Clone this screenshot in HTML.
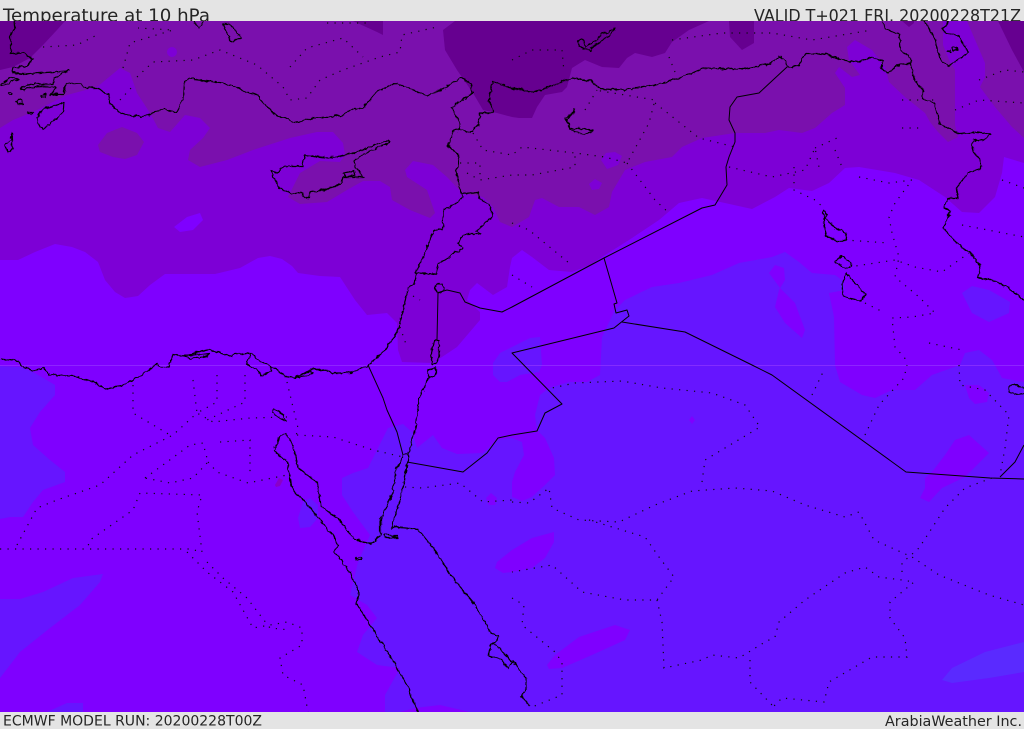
<!DOCTYPE html>
<html><head><meta charset="utf-8"><title>Temperature at 10 hPa</title>
<style>html,body{margin:0;padding:0;background:#e4e4e4;width:1024px;height:729px;overflow:hidden}svg{display:block}
text{font-family:"DejaVu Sans","Liberation Sans",sans-serif;fill:#252525}</style></head><body>
<svg width="1024" height="729" viewBox="0 0 1024 729" xmlns="http://www.w3.org/2000/svg">
<defs><clipPath id="h"><rect x="0" y="0" width="1024" height="21"/></clipPath><clipPath id="m"><rect x="0" y="21" width="1024" height="691"/></clipPath>
<filter id="j" x="0" y="0" width="1024" height="729" filterUnits="userSpaceOnUse"><feTurbulence type="turbulence" baseFrequency="0.12" numOctaves="2" seed="4" result="t"/><feDisplacementMap in="SourceGraphic" in2="t" scale="3.5" xChannelSelector="R" yChannelSelector="G"/></filter></defs>
<rect width="1024" height="729" fill="#e4e4e4"/>
<g clip-path="url(#h)">
<text x="3" y="21.5" font-size="18" textLength="207" lengthAdjust="spacingAndGlyphs">Temperature at 10 hPa</text>
<text x="754" y="21.5" font-size="17" textLength="267" lengthAdjust="spacingAndGlyphs">VALID T+021 FRI. 20200228T21Z</text>
</g>
<text x="3" y="725.5" font-size="14.5" textLength="259" lengthAdjust="spacingAndGlyphs">ECMWF MODEL RUN: 20200228T00Z</text>
<text x="885" y="726" font-size="14.5" textLength="137" lengthAdjust="spacingAndGlyphs">ArabiaWeather Inc.</text>
<g clip-path="url(#m)">
<rect x="0" y="21" width="1024" height="691" fill="#7f00ff"/>
<path fill="#7d00d6" d="M0 260 18 260 35 252 55 244 72 247 85 252 98 262 105 280 115 292 125 298 138 296 150 285 165 274 190 274 215 274 240 268 258 258 270 256 282 259 292 266 298 273 320 276 340 277 355 300 367 315 387 313 397 323 398 350 402 362 433 363 457 347 480 320 480 312 467 300 470 290 477 283 493 295 507 287 510 267 512 258 522 250 532 257 549 270 572 272 590 265 602 257 629 240 659 220 679 203 702 198 725 203 752 209 775 197 789 188 812 191 829 183 845 168 859 167 895 173 919 180 945 197 962 212 979 213 995 197 1002 173 1004 157 1024 163 1024 21 0 21Z"/>
<path fill="#7f00ff" d="M174 227 187 217 200 213 203 220 193 230 180 232Z"/>
<path fill="#7a10ad" d="M0 128 13 120 33 112 67 95 97 87 120 68 130 73 137 93 150 113 158 128 170 132 178 123 185 115 200 118 210 128 203 138 190 150 188 160 200 167 227 160 253 150 290 138 317 132 333 132 343 143 345 155 340 162 320 161 300 173 288 197 300 204 327 202 347 190 363 181 380 181 390 187 392 200 410 210 430 218 435 213 427 190 407 177 405 170 413 161 433 165 447 177 462 193 483 197 493 207 500 222 512 227 529 217 535 200 542 198 559 207 579 207 595 215 609 207 612 192 625 170 645 162 672 157 682 147 702 138 735 133 765 133 779 130 802 133 815 128 832 113 845 105 845 88 835 73 839 67 852 77 860 75 849 60 847 47 855 40 872 50 885 67 889 82 905 97 925 113 930 122 938 132 948 142 958 137 955 125 955 100 955 70 950 62 943 45 943 21 0 21Z"/>
<path fill="#7a10ad" d="M967 21 985 63 985 77 980 87 995 107 1012 127 1024 138 1024 21Z"/>
<path fill="#7a10ad" d="M98 145 107 133 122 127 137 133 144 142 137 155 125 159 113 157 100 152Z"/>
<path fill="#7d00d6" d="M167 52a5 5 0 1 0 10 0a5 5 0 1 0-10 0ZM601 160 606 153 615 152 622 156 618 165 607 169ZM589 184 595 179 602 183 599 189 592 190Z"/>
<path fill="#660090" d="M0 70 13 67 30 58 43 45 57 30 65 21 0 21Z"/>
<path fill="#660090" d="M353 21 377 32 383 35 383 21Z"/>
<path fill="#660090" d="M455 21 443 30 445 50 457 70 473 93 483 110 497 113 512 117 519 118 532 118 537 107 545 95 562 92 567 87 572 68 585 60 602 67 619 68 627 58 635 53 652 57 665 53 672 42 689 30 709 21Z"/>
<path fill="#660090" d="M729 21 730 37 742 50 754 43 754 21Z"/>
<path fill="#660090" d="M902 21 909 27 914 23 914 21Z"/>
<path fill="#660090" d="M998 21 1012 50 1024 72 1024 21Z"/>
<path fill="#6615ff" d="M385 712 385 695 400 668 377 665 357 652 363 635 377 618 367 605 350 595 358 562 370 535 353 512 342 495 342 478 353 473 368 468 377 450 388 428 403 424 412 432 417 448 433 435 442 448 457 454 483 453 497 440 512 438 522 442 524 455 515 472 512 482 512 497 522 501 532 497 545 485 555 475 554 458 545 438 537 430 535 415 540 395 549 388 569 382 587 382 600 375 602 337 615 310 625 300 652 287 679 283 712 275 739 263 772 257 785 252 799 262 812 273 835 275 842 280 845 290 829 293 834 317 835 365 840 382 862 395 875 398 892 390 915 390 932 375 960 365 965 353 979 350 992 360 995 365 1002 378 1024 382 1024 712Z"/>
<path fill="#6615ff" d="M0 366 20 367 33 372 55 385 55 395 40 412 30 428 33 445 50 460 65 472 65 482 43 490 33 502 23 517 10 517 0 519Z"/>
<path fill="#6615ff" d="M0 599 20 599 43 592 73 578 103 574 100 582 80 605 50 628 20 652 0 678Z"/>
<path fill="#6615ff" d="M47 712 67 703 83 703 83 712Z"/>
<path fill="#6615ff" d="M298 518 303 502 310 498 318 505 318 518 310 527 300 528Z"/>
<path fill="#6615ff" d="M962 293 972 313 989 322 1009 313 1010 302 989 290 972 286Z"/>
<path fill="#6615ff" d="M493 375 500 382 507 382 520 375 539 372 542 365 540 337 530 338 512 347 500 353 493 363Z"/>
<path fill="#7f00ff" d="M400 712 415 708 440 705 470 712Z"/>
<path fill="#7f00ff" d="M495 568 497 562 512 550 532 538 554 532 554 542 545 558 532 568 512 572 503 573Z"/>
<path fill="#7f00ff" d="M547 665 555 655 579 637 615 625 630 630 625 640 592 655 562 668 549 669Z"/>
<path fill="#7f00ff" d="M920 498 925 488 925 478 932 472 945 455 955 440 969 435 989 453 965 477 942 488 929 502Z"/>
<path fill="#7f00ff" d="M965 385 979 385 989 393 987 402 975 404 969 398Z"/>
<path fill="#7f00ff" d="M769 273 775 265 784 268 785 280 779 290 775 307 785 323 802 338 805 330 795 303 780 288Z"/>
<path fill="#7f00ff" d="M692 416 695 420 692 424 689 420ZM486 498 491 493 497 498 495 505 489 505Z"/>
<path fill="#8a00c8" d="M275 485 279 478 283 480 280 486 276 487Z"/>
<path fill="#5a2aff" d="M942 680 952 668 985 652 1024 642 1024 672 989 678 952 683Z"/>
<rect x="0" y="365" width="1024" height="1" fill="#9a40ff" opacity=".55"/>

<g fill="none" stroke="#000" stroke-width="1.2" stroke-linejoin="round" filter="url(#j)">
<path d="M13 21 14 28 10 33 10 42 10 53 22 52 32 58 27 65 13 67 12 72 23 73 68 70 53 77 52 83 33 83 20 86 20 89 40 85 55 86 50 93 63 93 65 82 80 83 83 87 98 87 108 95 108 103 120 112 130 115 142 116 163 108 175 112 182 97 183 82 188 78 223 82 257 95 273 113 295 122 313 117 340 115 353 108 362 107 377 90 395 82 427 95 442 88 460 77 470 83 472 92 450 107 460 123 458 128 470 132 478 123 480 112 493 112 488 100 492 80 512 88 535 91 572 77 590 80 600 88 625 89 652 85 679 77 702 67 725 68 742 68 769 63 779 56 785 60 787 67 797 65 805 53 822 53 845 60 860 61 870 56 882 60 880 68 887 73 899 63 910 63 914 80 922 88 922 98 934 103 939 123 959 133 977 131 990 133 985 138 972 140 972 150 980 160 980 168 967 172 955 187 957 197 947 197 944 207 950 210 942 228 959 245 969 252 980 265 977 277 995 280 1009 288 1024 300"/>
<path d="M882 21 884 28 899 33 900 50 910 57 910 63"/>
<path d="M924 21 934 37 939 58 947 65 954 60 967 52 959 35 945 32 942 28 947 21"/>
<path d="M947 51 949 49 950 52ZM951 47 955 46 957 49 953 50Z"/>
<path d="M408 453 403 455 395 468 392 492 380 518 380 535 370 543 353 538 337 518 320 505 317 482 297 467 292 445 285 432 280 435 273 450 287 462 290 485 307 505 333 535 337 545 333 550 350 573 358 592 355 602 383 645 408 688 417 712"/>
<path d="M408 453 402 488 390 528 393 526 417 528 433 548 450 575 473 602 490 632 497 635 495 642 490 643 487 655 500 658 507 667 512 662 497 645 490 643M512 660 525 677 525 688 520 695 529 705"/>
<path d="M0 358 17 360 20 365 33 370 43 367 48 374 72 375 90 380 105 388 120 385 140 375 150 367 155 363 160 366 168 366 172 353 183 355 208 348 227 355 250 352 255 358 270 365 285 375 293 377 313 367 330 372 350 372 367 365 383 350 397 330 407 287 413 283 415 272 433 230 442 228 443 210 462 197 460 192 455 170 458 163 457 153 447 145 452 132 458 128"/>
<path d="M183 355 210 352 207 355 190 358ZM250 352 245 363 255 368 260 375 270 370 270 365M293 377 310 370 313 372 307 375Z"/>
<path d="M415 272 435 273 437 263 462 248 457 242 465 233 480 233 475 230 492 215 488 203 478 197 477 191 460 193"/>
<path d="M270 170 277 172 283 165 302 165 304 154 328 157 350 153 388 139 388 142 363 153 353 160 355 168 363 176 343 176 340 183 320 190 308 192 308 197 303 197 300 191 290 193 278 187 273 178Z"/>
<path d="M342 172 352 170 354 174 345 176Z"/>
<path d="M427 378 418 398 415 425 408 453M433 375 428 378 428 369 434 367 436 372Z"/>
<path d="M437 292 433 288 436 283 441 283 443 288 440 292Z"/>
<path d="M433 340 438 340 438 355 435 363 431 363 430 352Z"/>
<path d="M63 101 62 112 50 122 42 128 37 123 36 117 43 108Z"/>
<path d="M11 132 12 148 7 152 4 143 10 140Z"/>
<path d="M0 83 10 77 18 78 7 83 0 85Z"/>
<path d="M193 21 198 28 203 21M222 23 228 23 241 37 230 41 227 33Z"/>
<path d="M7 93a2 1.5 0 1 0 4 0a2 1.5 0 1 0-4 0ZM15 100 20 99 22 103 17 103ZM27 111h5v2h-5ZM40 94 45 93 45 97 41 96ZM50 93 56 92 56 94 50 94Z"/>
<path d="M576 40 582 38 585 46 597 38 600 33 607 32 614 27 610 35 600 40 590 47 590 50 578 46Z"/>
<path d="M573 107 573 112 564 117 570 128 583 128 592 130 583 134 570 129 566 118 574 111"/>
<path d="M823 209 826 212 824 218 836 228 846 232 845 240 835 240 825 235 823 225Z"/>
<path d="M834 260 841 255 846 260 850 262 850 266 845 268 835 262Z"/>
<path d="M846 272 850 278 860 288 865 293 860 300 850 298 842 295 841 283Z"/>
<path d="M1008 387 1014 383 1024 388 1024 393 1014 394 1008 391Z"/>
<path d="M272 408 280 410 285 420 277 416 272 412Z"/>
<path d="M383 533 390 534 396 537 385 537ZM393 535h4v2h-4ZM354 557 360 557 361 560 355 559Z"/>
</g>
<g fill="none" stroke="#000" stroke-width="1" stroke-linejoin="round">
<path d="M787 67 759 93 737 97 730 107 729 120 735 133 735 142 729 157 726 167 727 185 715 205 702 208 604 258 512 307 502 312 480 308 465 302 460 293 447 290 440 292 438 293 437 340"/>
<path d="M604 258 617 303 614 304 616 313 627 310 629 316 614 328 512 353 562 404 545 413 537 431 512 435 498 438 487 453 463 472 407 462"/>
<path d="M622 322 685 332 752 365 772 375 906 472 990 478 1024 479"/>
<path d="M1000 477 1015 462 1024 445"/>
<path d="M368 365 383 398 387 410 397 432 403 455"/>
</g>

<g fill="none" stroke="#0a0a0a" stroke-width="1.2" stroke-dasharray="1.2 6.3">
<path d="M512 502 529 503 549 488 552 508 579 520 619 522 655 505 692 491 735 488 772 491 805 505 845 517 859 512 874 540 912 557 939 575 989 595 1024 605"/>
<path d="M589 520 645 537 659 557 674 577 657 600 625 600 582 592 552 565 512 572"/>
<path d="M657 600 662 622 664 668 702 660 712 655 739 658 765 642 775 637 779 622 805 600 845 573 865 567 879 577 902 580 914 582 890 602 890 618 905 638 907 657 872 657 829 682 824 702 782 698 772 708"/>
<path d="M750 660 750 682 772 705"/>
<path d="M702 482 705 460 760 427 745 405 712 393 662 388 622 381 575 383 552 388"/>
<path d="M902 572 902 563 919 548 945 508 965 488 992 478"/>
<path d="M865 435 879 405 904 378 907 365M812 395 824 370"/>
<path d="M959 365 960 385 985 390 1009 415 1005 448 1000 475"/>
<path d="M512 598 524 605 522 625 555 652 562 662 562 695 532 707"/>
<path d="M0 549 190 549 202 552 197 512 202 495 140 493 133 510 90 540 87 549"/>
<path d="M17 545 37 508 57 500 100 485 133 455 173 435 197 413 213 422 250 418 287 417"/>
<path d="M145 478 167 462 190 445 203 443 208 462 193 478 170 483 145 478"/>
<path d="M208 462 217 472 248 483 287 475M220 442 250 440 250 472"/>
<path d="M187 552 207 572 233 592 253 628 287 622 302 628 302 645 280 658 283 675 303 685 308 712"/>
<path d="M207 562 223 578 247 598 270 628 290 630"/>
<path d="M133 385 133 413 170 435M193 380 197 413M217 375 217 402 197 413M245 375 245 402 207 420"/>
<path d="M287 382 298 428 295 440M297 435 333 437 373 450 403 457"/>
<path d="M405 487 422 488 460 483 483 502 512 500"/>
<path d="M43 47 77 45 97 35M123 68 130 43 173 30 138 28"/>
<path d="M137 77 153 62 193 60 220 50 257 65 283 87 290 100 307 98 320 80 343 70 380 57 400 52 402 35 437 27"/>
<path d="M290 67 307 48 343 38 363 57M327 23 367 23M120 100 132 87"/>
<path d="M473 133 483 150 512 155 522 147 575 153 605 157 627 163 649 123 655 100 595 90"/>
<path d="M460 163 480 163 480 180 512 175 532 175 575 167 575 153M467 173 480 180"/>
<path d="M512 60 532 50 562 50 564 72M585 110 597 90"/>
<path d="M655 103 699 138 735 147M627 163 655 200 669 213M512 223 529 230 569 263M512 275 532 287"/>
<path d="M672 40 722 33 772 33 812 40 872 30M669 57 675 72"/>
<path d="M729 167 772 177 805 170 815 148 819 167M815 148 837 138M835 150 842 167M794 167 794 190 815 200 824 208"/>
<path d="M859 177 889 183 912 180 895 203 889 217 892 233 899 257 895 277 919 297 935 313 912 317 892 318 895 347 909 363"/>
<path d="M845 240 889 243M849 267 895 260 915 267 942 272 969 253M865 303 885 313M929 343 962 350"/>
<path d="M902 128 919 128M902 100 935 100M955 110 979 100 1024 103M979 80 1005 70 1024 72M962 225 1024 237M1002 180 1024 188"/>
<path d="M413 296 420 300M400 327 407 347M393 338 400 340"/>
</g>
</g>
</svg>
</body></html>
